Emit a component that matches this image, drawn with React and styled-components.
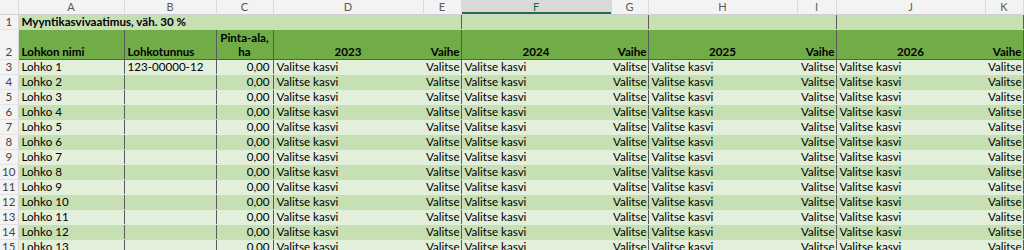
import React from "react";
import styled, { createGlobalStyle } from "styled-components";

const GlobalStyle = createGlobalStyle`
  html, body {
    margin: 0;
    padding: 0;
    background: #ffffff;
  }
  body {
    font-family: Lato, "Liberation Sans", Arial, sans-serif;
  }
`;

const COLS = [
  { key: "A", width: 106 },
  { key: "B", width: 92 },
  { key: "C", width: 57 },
  { key: "D", width: 150 },
  { key: "E", width: 38 },
  { key: "F", width: 150 },
  { key: "G", width: 37 },
  { key: "H", width: 149 },
  { key: "I", width: 39 },
  { key: "J", width: 149 },
  { key: "K", width: 38 },
];

const YEARS = ["2023", "2024", "2025", "2026"];
const ROWS = 13;

const Sheet = styled.table`
  border-collapse: collapse;
  table-layout: fixed;
  width: 1023px;
  font-size: 11.6px;
  color: #000;
`;

const ColHead = styled.th`
  height: 14px;
  padding: 0;
  font-weight: 400;
  font-size: 11px;
  line-height: 14px;
  text-align: center;
  color: ${(p) => (p.$selected ? "#1e6e3f" : "#5a5a5a")};
  background: ${(p) => (p.$selected ? "#d9d9d9" : "#f3f3f3")};
  border-right: 1px solid #dadada;
  box-shadow: ${(p) => (p.$selected ? "inset 0 -2px 0 #217346" : "none")};
  border-bottom: 1px solid #d0d0d0;
`;

const Corner = styled.th`
  width: 18px;
  padding: 0;
  background: #f3f3f3;
  border-right: 1px solid #dadada;
  border-bottom: 1px solid #d0d0d0;
`;

const RowHead = styled.th`
  padding: 0;
  font-weight: 400;
  font-size: 11.5px;
  color: #444;
  text-align: center;
  vertical-align: ${(p) => (p.$bottom ? "bottom" : "middle")};
  line-height: 14px;
  background: #f3f3f3;
  border-right: 1px solid #d6d6d6;
  border-bottom: 1px solid #e4e4e4;
`;

const Row = styled.tr`
  height: ${(p) => p.$height || 15}px;
`;

const Cell = styled.td`
  padding: ${(p) => (p.$tight ? "0 1px 0 0" : "0 3px")};
  height: ${(p) => (p.$height || 15) - 1}px;
  line-height: 14px;
  white-space: nowrap;
  overflow: hidden;
  text-align: ${(p) => p.$align || "left"};
  vertical-align: ${(p) => (p.$bottom ? "bottom" : "middle")};
  font-weight: ${(p) => (p.$bold ? 700 : 400)};
  background: ${(p) => p.$bg};
  border-right: 1px solid ${(p) => (p.$edge ? "#5b5b5b" : p.$bg)};
  border-bottom: 1px solid ${(p) => (p.$underline ? "#5b5b5b" : p.$bg)};
`;

const GREEN = "#70ad47";
const LIGHT = "#e2efda";
const MID = "#c6e0b4";

const HeaderRow = () => (
  <Row $height={30}>
    <RowHead $bottom>2</RowHead>
    <Cell $height={30} $bg={GREEN} $bold $bottom $edge $underline>
      Lohkon nimi
    </Cell>
    <Cell $height={30} $bg={GREEN} $bold $bottom $edge $underline>
      Lohkotunnus
    </Cell>
    <Cell $height={30} $bg={GREEN} $bold $bottom $edge $underline $align="center">
      Pinta-ala,
      <br />
      ha
    </Cell>
    {YEARS.map((year) => (
      <React.Fragment key={year}>
        <Cell $height={30} $bg={GREEN} $bold $bottom $underline $align="center">
          {year}
        </Cell>
        <Cell
          $height={30}
          $bg={GREEN}
          $bold
          $bottom
          $edge
          $underline
          $tight
          $align="right"
        >
          Vaihe
        </Cell>
      </React.Fragment>
    ))}
  </Row>
);

const DataRow = ({ n }) => {
  const bg = n % 2 === 1 ? LIGHT : MID;
  return (
    <Row>
      <RowHead>{n + 2}</RowHead>
      <Cell $bg={bg} $edge>
        Lohko {n}
      </Cell>
      <Cell $bg={bg} $edge>
        {n === 1 ? "123-00000-12" : ""}
      </Cell>
      <Cell $bg={bg} $edge $align="right">
        0,00
      </Cell>
      {YEARS.map((year) => (
        <React.Fragment key={year}>
          <Cell $bg={bg}>Valitse kasvi</Cell>
          <Cell $bg={bg} $edge $tight $align="right">
            Valitse
          </Cell>
        </React.Fragment>
      ))}
    </Row>
  );
};

const App = () => {
  const rows = Array.from({ length: ROWS }, (_, i) => i + 1);
  return (
    <>
      <GlobalStyle />
      <Sheet>
        <colgroup>
          <col style={{ width: 18 }} />
          {COLS.map((c) => (
            <col key={c.key} style={{ width: c.width }} />
          ))}
        </colgroup>
        <thead>
          <tr>
            <Corner />
            {COLS.map((c) => (
              <ColHead key={c.key} $selected={c.key === "F"}>
                {c.key}
              </ColHead>
            ))}
          </tr>
        </thead>
        <tbody>
          <Row>
            <RowHead>1</RowHead>
            <Cell $bg={MID} $bold colSpan={5} $edge>
              Myyntikasvivaatimus, väh. 30 %
            </Cell>
            <Cell $bg={MID} colSpan={2} $edge />
            <Cell $bg={MID} colSpan={2} $edge />
            <Cell $bg={MID} colSpan={2} $edge />
          </Row>
          <HeaderRow />
          {rows.map((n) => (
            <DataRow key={n} n={n} />
          ))}
        </tbody>
      </Sheet>
    </>
  );
};

export default App;
